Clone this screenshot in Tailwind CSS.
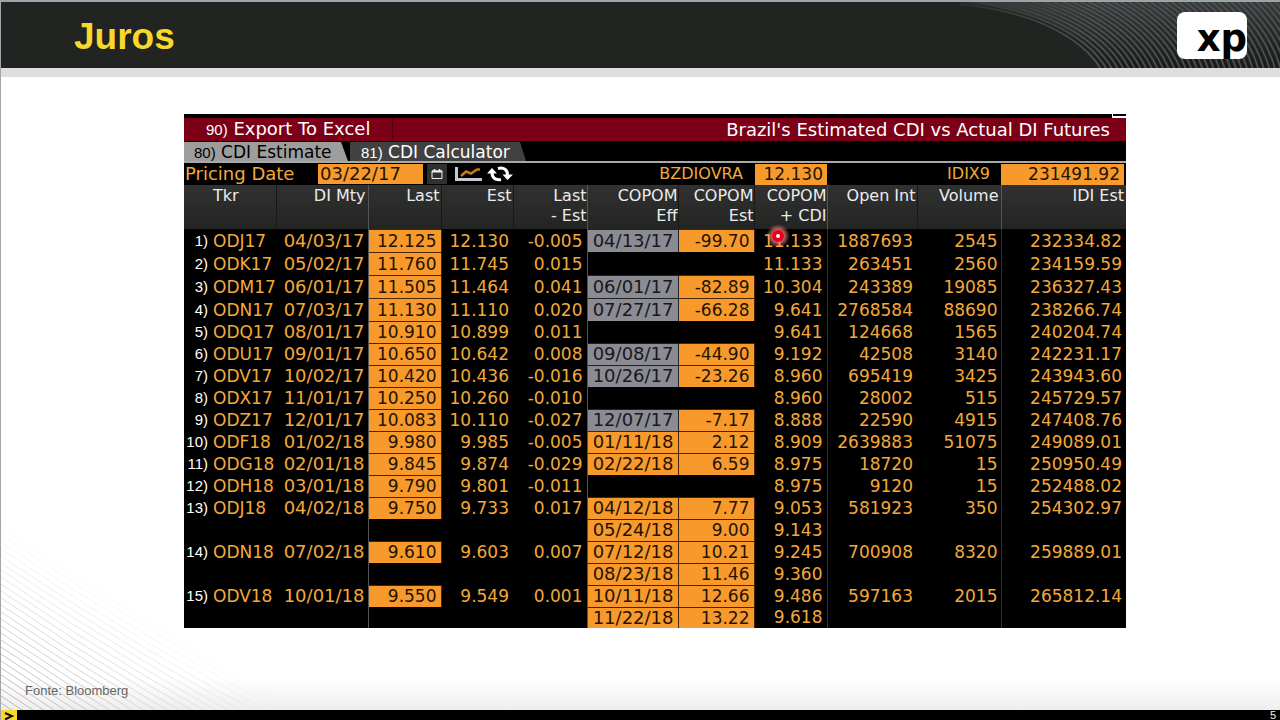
<!DOCTYPE html>
<html lang="pt-BR">
<head>
    <meta charset="UTF-8">
    <meta name="viewport" content="width=device-width, initial-scale=1.0">
    <title>Juros</title>
    <script src="https://cdn.jsdelivr.net/npm/@tailwindcss/browser@4"></script>
</head>
<body class="bg-white">
    <div class="min-h-screen flex flex-col border-l border-[#a3a5aa] relative overflow-hidden font-['DejaVu_Sans',sans-serif]">
        <!-- Header -->
        <header class="h-[68px] border-t-2 border-[#9ca3aa] bg-[#222421] relative flex items-center justify-between pl-[73px] pr-[33px]">
            <svg class="absolute right-0 top-0 h-full" width="320" height="66" viewBox="960 2 320 66" fill="none" aria-hidden="true">
                <defs>
                    <linearGradient id="headShade" x1="0" y1="0" x2="0" y2="1">
                        <stop offset="0" stop-color="#353b3b"/>
                        <stop offset="0.5" stop-color="#262a28"/>
                        <stop offset="1" stop-color="#191b19"/>
                    </linearGradient>
                    <linearGradient id="lineShade" x1="960" y1="0" x2="1090" y2="0" gradientUnits="userSpaceOnUse">
                        <stop offset="0" stop-color="#2b2f2d"/>
                        <stop offset="1" stop-color="#4c504e"/>
                    </linearGradient>
                </defs>
                <path d="M960 2H1280V68H1101C1092 40 1040 10 960 2Z" fill="url(#headShade)"/>
                <ellipse cx="930" cy="95" rx="178" ry="92" fill="#222421"/>
                <g id="headerLines" stroke="url(#lineShade)" stroke-width="1.8"></g>
            </svg>
            <h1 class="relative pt-1 font-['Liberation_Sans',sans-serif] font-bold text-[37px] leading-10 text-[#f6d92b]">Juros</h1>
            <div class="relative w-[70px] h-[47px] rounded-lg bg-white flex items-end justify-end font-bold text-[37px] leading-[40px] text-black">xp</div>
        </header>
        <div class="h-[9px] bg-[#dedede]"></div>

        <!-- Slide body -->
        <main class="grow relative pt-[37px] pl-[183px] pr-[154px] bg-linear-to-t from-[#eeeeee] from-0% to-white to-5%">
            <svg class="absolute left-0 bottom-0" width="300" height="210" viewBox="0 0 300 210" fill="none" aria-hidden="true">
                <defs>
                    <linearGradient id="fade" x1="0" y1="210" x2="86" y2="74" gradientUnits="userSpaceOnUse">
                        <stop offset="0" stop-color="#b4b4b4"/>
                        <stop offset="0.5" stop-color="#d8d8d8"/>
                        <stop offset="1" stop-color="#d8d8d8" stop-opacity="0"/>
                    </linearGradient>
                </defs>
                <g id="cornerLines" stroke="url(#fade)" stroke-width="1"></g>
            </svg>

            <section class="relative bg-black text-base text-[#f2a93b]">
                <div class="h-1 flex justify-end"><span class="w-[14px] h-1 border-l border-b-2 border-white"></span></div>
                <div class="h-[23px] bg-[#7b0017] text-white text-lg leading-5 flex items-center justify-between">
                    <button class="w-[209px] h-full pl-[22px] border-r border-[#4c0010] text-left whitespace-nowrap"><span class="font-['Liberation_Sans',sans-serif] text-[15px]">90)</span> Export To Excel</button>
                    <h2 class="pr-4 whitespace-nowrap">Brazil's Estimated CDI vs Actual DI Futures</h2>
                </div>
                <nav class="h-[22px] pt-px flex gap-[2px] border-b-2 border-[#a9a9a9] text-[17px] leading-5 whitespace-nowrap">
                    <button class="w-[164px] pl-[10px] text-left text-black bg-[#9d9d9d] [clip-path:polygon(0_0,157px_0,100%_100%,0_100%)]"><span class="font-['Liberation_Sans',sans-serif] text-[15px]">80)</span> CDI Estimate</button>
                    <button class="w-[176px] pl-[11px] text-left text-white bg-[#414141] [clip-path:polygon(0_0,170px_0,100%_100%,0_100%)]"><span class="font-['Liberation_Sans',sans-serif] text-[15px]">81)</span> CDI Calculator</button>
                </nav>
                <div class="h-[22px] flex items-center leading-5 whitespace-nowrap">
                    <label for="pricingDate" class="w-[134px] pl-px text-lg leading-5">Pricing Date</label>
                    <input id="pricingDate" type="text" value="03/22/17" class="w-[105px] h-5 pl-[2px] bg-[#f79a2b] text-[#241304] text-lg leading-5">
                    <button aria-label="Calendar" class="ml-1 w-5 h-5 bg-[#303030] flex items-center justify-center">
                        <svg width="12" height="12" viewBox="0 0 12 12" fill="none" stroke="#eee"><path d="M1 3H11V10.500H1Z"/><path d="M1 3.500H11" stroke-width="2"/><path d="M3.500 1V3M8.500 1V3" stroke-width="1.500"/></svg>
                    </button>
                    <button aria-label="Chart" class="ml-2">
                        <svg width="27" height="18" viewBox="0 0 27 18" fill="none"><path d="M1.500 2V14.500H27" stroke="#c4c8d0" stroke-width="3"/><path d="M6 11L11 6.500L16 8.500L22 4.500H25" stroke="#c47a16" stroke-width="2.500"/></svg>
                    </button>
                    <button aria-label="Refresh" class="ml-1">
                        <svg width="28" height="18" viewBox="0 0 28 18" fill="none" stroke="#fff" stroke-width="3"><path d="M15 14.500C9 15.500 6 12.500 6 7.500"/><path d="M12 3.500C18 2 21.500 5 21.500 10"/><path d="M1 8.500L6 3L11 8.500ZM16.500 9.500H27L21.500 15Z" fill="#fff" stroke="none"/></svg>
                    </button>
                    <span class="grow text-right pr-3">BZDIOVRA</span>
                    <output class="w-[72px] h-[21px] pr-1 text-right bg-[#f79a2b] text-[#241304] text-[17px]">12.130</output>
                    <span class="w-[174px] text-right pr-[11px]">IDIX9</span>
                    <output class="w-[123px] h-[21px] mr-[2px] pr-1 text-right bg-[#f79a2b] text-[#241304] text-[17px]">231491.92</output>
                </div>
                <table class="w-full table-fixed border-collapse text-right whitespace-nowrap">
                    <colgroup>
                        <col class="w-[27px]"><col class="w-[65px]"><col class="w-[92px]"><col class="w-[73px]"><col class="w-[72px]"><col class="w-[74px]"><col class="w-[91px]"><col class="w-[76px]"><col class="w-[73px]"><col class="w-[90px]"><col class="w-[84px]"><col class="w-[125px]">
                    </colgroup>
                    <thead class="bg-linear-to-b from-[#303130] to-[#232523] text-[#ececec] leading-5">
                        <tr class="h-[44px] align-top">
                            <th class="font-normal p-0"></th>
                            <th class="font-normal p-0 pt-px pl-[2px] text-left border-r border-[#171817]">Tkr</th>
                            <th class="font-normal p-0 pt-px pr-[2px] border-r border-[#555]">DI Mty</th>
                            <th class="font-normal p-0 pt-px pr-[1px] border-r border-[#171817]">Last</th>
                            <th class="font-normal p-0 pt-px pr-[1px] border-r border-[#171817]">Est</th>
                            <th class="font-normal p-0 pt-px border-r border-[#555]">Last<br>- Est</th>
                            <th class="font-normal p-0 pt-px border-r border-[#171817]">COPOM<br>Eff</th>
                            <th class="font-normal p-0 pt-px border-r border-[#171817]">COPOM<br>Est</th>
                            <th class="font-normal p-0 pt-px border-r border-[#555]">COPOM<br>+ CDI</th>
                            <th class="font-normal p-0 pt-px pr-[1px] border-r border-[#171817]">Open Int</th>
                            <th class="font-normal p-0 pt-px pr-[2px] border-r border-[#555]">Volume</th>
                            <th class="font-normal p-0 pt-px pr-[2px]">IDI Est</th>
                        </tr>
                    </thead>
                    <tbody id="rows" class="text-[17px] leading-5"></tbody>
                </table>
                <!-- Laser pointer -->
                <div class="absolute left-[582px] top-[110px] size-6 rounded-full bg-radial from-[#ff8080]/90 from-30% to-transparent to-70% flex items-center justify-center">
                    <span class="size-3 rounded-full border-4 border-[#e8001c] bg-white"></span>
                </div>
            </section>
            <p class="absolute left-6 bottom-[11px] font-['Liberation_Sans',sans-serif] text-[13px] leading-4 text-[#666]">Fonte: Bloomberg</p>
        </main>

        <!-- Footer -->
        <footer class="h-[10px] bg-black flex items-center justify-between pr-1 relative">
            <span class="w-4 h-[10px] bg-[#f6d92b]">
                <svg width="16" height="10" viewBox="0 0 16 10" fill="none" stroke="#111" stroke-width="2"><path d="M4 3L11 6L4 9.500"/></svg>
            </span>
            <span class="font-['Liberation_Sans',sans-serif] text-[11px] leading-[10px] text-[#f4f4dc]">5</span>
        </footer>
    </div>

    <script>
        // ticker, maturity, last, est, last-est, copom eff, copom est, copom+cdi, open int, volume, idi est
        const data = [
            ['ODJ17', '04/03/17', '12.125', '12.130', '-0.005', '04/13/17', '-99.70', '11.133', '1887693', '2545', '232334.82'],
            ['ODK17', '05/02/17', '11.760', '11.745', '0.015', '', '', '11.133', '263451', '2560', '234159.59'],
            ['ODM17', '06/01/17', '11.505', '11.464', '0.041', '06/01/17', '-82.89', '10.304', '243389', '19085', '236327.43'],
            ['ODN17', '07/03/17', '11.130', '11.110', '0.020', '07/27/17', '-66.28', '9.641', '2768584', '88690', '238266.74'],
            ['ODQ17', '08/01/17', '10.910', '10.899', '0.011', '', '', '9.641', '124668', '1565', '240204.74'],
            ['ODU17', '09/01/17', '10.650', '10.642', '0.008', '09/08/17', '-44.90', '9.192', '42508', '3140', '242231.17'],
            ['ODV17', '10/02/17', '10.420', '10.436', '-0.016', '10/26/17', '-23.26', '8.960', '695419', '3425', '243943.60'],
            ['ODX17', '11/01/17', '10.250', '10.260', '-0.010', '', '', '8.960', '28002', '515', '245729.57'],
            ['ODZ17', '12/01/17', '10.083', '10.110', '-0.027', '12/07/17', '-7.17', '8.888', '22590', '4915', '247408.76'],
            ['ODF18', '01/02/18', '9.980', '9.985', '-0.005', '01/11/18', '2.12', '8.909', '2639883', '51075', '249089.01'],
            ['ODG18', '02/01/18', '9.845', '9.874', '-0.029', '02/22/18', '6.59', '8.975', '18720', '15', '250950.49'],
            ['ODH18', '03/01/18', '9.790', '9.801', '-0.011', '', '', '8.975', '9120', '15', '252488.02'],
            ['ODJ18', '04/02/18', '9.750', '9.733', '0.017', '04/12/18', '7.77', '9.053', '581923', '350', '254302.97'],
            ['', '', '', '', '', '05/24/18', '9.00', '9.143', '', '', ''],
            ['ODN18', '07/02/18', '9.610', '9.603', '0.007', '07/12/18', '10.21', '9.245', '700908', '8320', '259889.01'],
            ['', '', '', '', '', '08/23/18', '11.46', '9.360', '', '', ''],
            ['ODV18', '10/01/18', '9.550', '9.549', '0.001', '10/11/18', '12.66', '9.486', '597163', '2015', '265812.14'],
            ['', '', '', '', '', '11/22/18', '13.22', '9.618', '', '', '']
        ];
        const cols = ['text-left pl-[2px]', 'pr-[3px] text-lg leading-5 border-r border-[#555]', 'pr-1', 'pr-1', 'pr-1 border-r border-[#555]', 'pr-1 text-lg leading-5', 'pr-1', 'pr-1 border-r border-[#333]', 'pr-1', 'pr-[3px] border-r border-[#333]', 'pr-1'];
        let n = 0;
        document.getElementById('rows').innerHTML = data.map((row, r) => {
            const height = r < 4 ? 'h-[23px]' : r === data.length - 1 ? 'h-5' : 'h-[22px]';
            const num = row[0] ? ++n + ')' : '';
            const cells = row.map((text, c) => {
                let fill = '';
                if (text && (c === 2 || c === 6 || (c === 5 && text.endsWith('18')))) {
                    fill = 'bg-[#f79a2b] text-[#241304] border-t border-t-[#4a2405] border-r border-r-[#4a2405]';
                } else if (text && c === 5) {
                    fill = 'bg-[#8b8b93] text-[#18181b] border-t border-t-[#222] border-r border-r-[#222]';
                }
                return `<td class="p-0 ${cols[c]} ${fill}">${text}</td>`;
            }).join('');
            return `<tr class="${height}"><td class="p-0 pr-[3px] text-white text-[15px] font-['Liberation_Sans',sans-serif]">${num}</td>${cells}</tr>`;
        }).join('');

        // curved line texture in the header
        let arcs = '';
        for (let k = 0; k < 50; k++) {
            arcs += `<ellipse cx="930" cy="95" rx="${178 + k * 5.5}" ry="${92 + k * 3}"/>`;
        }
        document.getElementById('headerLines').innerHTML = arcs;

        // slanted line texture in the lower left corner
        let slants = '';
        for (let y = 0; y < 210; y += 7) {
            slants += `<path d="M0 ${y}Q140 ${y + 95} 300 ${y + 180}"/>`;
        }
        document.getElementById('cornerLines').innerHTML = slants;
    </script>
</body>
</html>
